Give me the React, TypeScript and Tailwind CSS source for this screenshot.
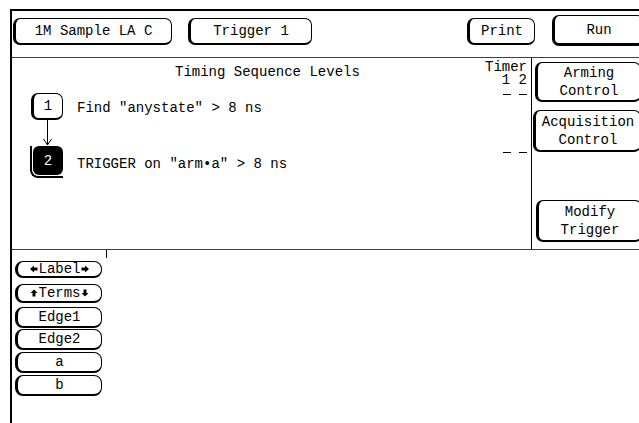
import React from "react";

const btn =
  "border border-black border-l-[3px] border-b-[2px] rounded-[7px] flex items-center justify-center bg-white shrink-0";

function LeftArrow() {
  return (
    <svg width="8" height="8" viewBox="0 0 8 8" className="block">
      <path d="M0 4 L4 0.5 L4 2.5 L7.5 2.5 L7.5 5.5 L4 5.5 L4 7.5 Z" fill="black" />
    </svg>
  );
}
function RightArrow() {
  return (
    <svg width="8" height="8" viewBox="0 0 8 8" className="block">
      <path d="M8 4 L4 0.5 L4 2.5 L0.5 2.5 L0.5 5.5 L4 5.5 L4 7.5 Z" fill="black" />
    </svg>
  );
}
function UpArrow() {
  return (
    <svg width="8" height="8" viewBox="0 0 8 8" className="block">
      <path d="M4 0.5 L7.5 4 L5.5 4 L5.5 7.5 L2.5 7.5 L2.5 4 L0.5 4 Z" fill="black" />
    </svg>
  );
}
function DownArrow() {
  return (
    <svg width="8" height="8" viewBox="0 0 8 8" className="block">
      <path d="M4 7.5 L7.5 4 L5.5 4 L5.5 0.5 L2.5 0.5 L2.5 4 L0.5 4 Z" fill="black" />
    </svg>
  );
}

export default function App() {
  return (
    <div className="w-[639px] h-[423px] bg-white overflow-hidden text-black [font-family:'Liberation_Mono',monospace] text-[14px] leading-[16px] pt-[9px] pl-[10px]">
      <div className="h-[414px] border-t-2 border-l-2 border-black flex flex-col">
        {/* top bar */}
        <div className="h-[47px] border-b border-[#404040] flex items-start pt-[7px] shrink-0">
          <div className={`${btn} ml-[1px] w-[159px] h-[27px]`}>1M Sample LA C</div>
          <div className={`${btn} ml-[16px] w-[124px] h-[27px]`}>Trigger 1</div>
          <div className={`${btn} ml-[155px] w-[68px] h-[27px]`}>Print</div>
          <div className={`${btn} ml-[17px] w-[92px] h-[31px] -mt-[3px] border-b-[3px]`}>Run</div>
        </div>

        {/* main area */}
        <div className="h-[192px] border-b border-[#404040] flex shrink-0">
          <div className="w-[520px] border-r border-black flex shrink-0">
            <div className="flex-1 flex flex-col">
              <div className="mt-[6px] pl-[163px] whitespace-nowrap">Timing Sequence Levels</div>
              <div className="mt-[13px] flex items-center pl-[19px]">
                <div className={`${btn} w-[32px] h-[27px] rounded-[6px]`}>1</div>
                <div className="ml-[14px] pt-[3px] whitespace-nowrap">Find "anystate" &gt; 8 ns</div>
              </div>
              <svg width="9" height="26" viewBox="0 0 9 26" className="block ml-[31px]">
                <line x1="4.5" y1="0" x2="4.5" y2="25" stroke="black" strokeWidth="1" />
                <polyline points="0.5,19 4.5,25 8.5,19" fill="none" stroke="black" strokeWidth="1" />
              </svg>
              <div className="flex items-start pl-[18px]">
                <div className="border-l-2 border-b-2 border-black rounded-bl-[8px] pl-[1px] pb-[1px] shrink-0">
                  <div className="w-[30px] h-[29px] bg-black rounded-[6px] text-white flex items-center justify-center">
                    2
                  </div>
                </div>
                <div className="ml-[14px] self-center pt-[3px] whitespace-nowrap">
                  TRIGGER on "arm•a" &gt; 8 ns
                </div>
              </div>
            </div>
            <div className="w-[40px] shrink-0 flex flex-col items-end pr-[4px]">
              <div className="mt-[3px] leading-[12px]">Timer</div>
              <div className="mt-[1px] leading-[12px] whitespace-pre">1 2</div>
              <div className="mt-[8px] flex gap-[8px]">
                <div className="w-[8px] h-[1px] bg-black" />
                <div className="w-[8px] h-[1px] bg-black" />
              </div>
              <div className="mt-[57px] flex gap-[8px]">
                <div className="w-[8px] h-[1px] bg-black" />
                <div className="w-[8px] h-[1px] bg-black" />
              </div>
            </div>
          </div>
          <div className="flex-1 flex flex-col">
            <div className={`${btn} ml-[3px] mt-[4px] w-[106px] h-[40px] flex-col leading-[18px]`}>
              <span>Arming</span>
              <span>Control</span>
            </div>
            <div className={`${btn} ml-[1px] mt-[8px] w-[108px] h-[42px] flex-col leading-[18px]`}>
              <span>Acquisition</span>
              <span>Control</span>
            </div>
            <div className={`${btn} ml-[4px] mt-[48px] w-[106px] h-[42px] flex-col leading-[18px]`}>
              <span>Modify</span>
              <span>Trigger</span>
            </div>
          </div>
        </div>

        {/* bottom area */}
        <div className="flex-1 flex">
          <div className="w-[95px] flex flex-col shrink-0">
            <div className="h-[8px] border-r border-black" />
            <div className="pl-[3px] flex flex-col mt-[3px]">
              <div className={`${btn} w-[87px] h-[17px] rounded-[8px] justify-between px-[3px]`}>
                <LeftArrow />
                <span>Label</span>
                <RightArrow />
              </div>
              <div className={`${btn} mt-[6px] w-[87px] h-[19px] rounded-[8px] justify-between px-[5px]`}>
                <UpArrow />
                <span>Terms</span>
                <DownArrow />
              </div>
              <div className={`${btn} mt-[4px] w-[87px] h-[21px] rounded-[8px]`}>Edge1</div>
              <div className={`${btn} mt-[1px] w-[87px] h-[21px] rounded-[8px]`}>Edge2</div>
              <div className={`${btn} mt-[2px] w-[87px] h-[21px] rounded-[8px]`}>a</div>
              <div className={`${btn} mt-[2px] w-[87px] h-[21px] rounded-[8px]`}>b</div>
            </div>
          </div>
          <div className="flex-1" />
        </div>
      </div>
    </div>
  );
}
